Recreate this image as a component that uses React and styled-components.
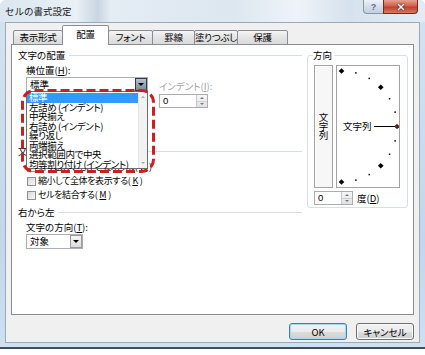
import styled, { createGlobalStyle } from "styled-components"
import { X } from "lucide-react"

const GlobalStyle = createGlobalStyle`
  html, body {
    margin: 0;
    padding: 0;
    background: #ffffff;
  }
  body {
    font-family: "Noto Sans CJK JP", "Noto Sans", sans-serif;
    font-size: 9.5px;
    font-feature-settings: "palt";
    color: #000000;
  }
`

const tabs = [
  { label: "表示形式", w: 50 },
  { label: "配置", w: 47, active: true },
  { label: "フォント", w: 45 },
  { label: "罫線", w: 43 },
  { label: "塗りつぶし", w: 44 },
  { label: "保護", w: 51 },
]

const alignOptions = [
  "標準",
  "左詰め (インデント)",
  "中央揃え",
  "右詰め (インデント)",
  "繰り返し",
  "両端揃え",
  "選択範囲内で中央",
  "均等割り付け (インデント)",
]

// dial: centre on the left edge, marks every 15 degrees
const CX = 4.5
const CY = 60.5
const R = 55.5
const marks = [90, 75, 60, 45, 30, 15, 0, -15, -30, -45, -60, -75, -90].map((a) => {
  const rad = (a * Math.PI) / 180
  return { a, x: CX + R * Math.cos(rad), y: CY - R * Math.sin(rad), big: a % 45 === 0 }
})

export default function App() {
  return (
    <>
      <GlobalStyle />
      <Window>
        <TitleBar>
          <Title>セルの書式設定</Title>
          <Caption>
            <HelpButton>?</HelpButton>
            <CloseButton>
              <X size={10} strokeWidth={3.5} color="#ffffff" />
            </CloseButton>
          </Caption>
        </TitleBar>

        <Body>
          <TabStrip>
            {tabs.map((t) => (
              <Tab key={t.label} $w={t.w} $active={t.active}>
                {t.label}
              </Tab>
            ))}
          </TabStrip>

          <Panel>
            <LeftCol>
              <GroupLabel>文字の配置</GroupLabel>
              <Section>
                <AlignRow>
                  <AlignCol>
                    <Label>横位置(<u>H</u>):</Label>
                    <SelectWrap>
                      <Select $w={122}>
                        <SelectText>標準</SelectText>
                        <ArrowButton $pressed />
                      </Select>
                      <DropList>
                        <ListItems>
                          {alignOptions.map((o, i) => (
                            <ListItem key={o} $selected={i === 0}>
                              {o}
                            </ListItem>
                          ))}
                        </ListItems>
                        <ScrollBar>
                          <ScrollArrow $up />
                          <ScrollArrow />
                        </ScrollBar>
                      </DropList>
                      <Annotation width="134" height="84" viewBox="0 0 134 84">
                        <rect
                          x="1.5"
                          y="1.5"
                          width="131"
                          height="81"
                          rx="12"
                          fill="none"
                          stroke="#cc1f1f"
                          strokeWidth="3"
                          strokeDasharray="9 4"
                        />
                      </Annotation>
                    </SelectWrap>
                    <Label $gap={5}>縦位置(<u>V</u>):</Label>
                    <Select $w={122} $gap={1}>
                      <SelectText>中央揃え</SelectText>
                      <ArrowButton />
                    </Select>
                  </AlignCol>
                  <IndentCol>
                    <Label $disabled>インデント(<u>I</u>):</Label>
                    <Spin $w={49} $gap={2}>
                      <SpinText>0</SpinText>
                      <SpinButtons>
                        <SpinArrow $up />
                        <SpinArrow />
                      </SpinButtons>
                    </Spin>
                  </IndentCol>
                </AlignRow>
              </Section>

              <GroupLabel $gap={20}>文字の制御</GroupLabel>
              <Section>
                <CheckRow $gap={3}>
                  <CheckBox />
                  折り返して全体を表示する(<u>W</u>)
                </CheckRow>
                <CheckRow>
                  <CheckBox />
                  縮小して全体を表示する(<u>K</u>)
                </CheckRow>
                <CheckRow>
                  <CheckBox />
                  セルを結合する(<u>M</u>)
                </CheckRow>
              </Section>

              <GroupLabel $gap={4}>右から左</GroupLabel>
              <Section>
                <Label $gap={3}>文字の方向(<u>T</u>):</Label>
                <Select $w={57} $gap={1}>
                  <SelectText>対象</SelectText>
                  <ArrowButton />
                </Select>
              </Section>
            </LeftCol>

            <RightCol>
              <GroupBox>
                <Legend>方向</Legend>
                <OrientRow>
                  <VerticalButton>文字列</VerticalButton>
                  <Dial>
                    <svg width="62" height="121" viewBox="0 0 62 121">
                      {marks.map((m) =>
                        m.big ? (
                          <rect
                            key={m.a}
                            x={m.x - 2}
                            y={m.y - 2}
                            width="4"
                            height="4"
                            transform={`rotate(45 ${m.x} ${m.y})`}
                            fill={m.a === 0 ? "#6b1a14" : "#000000"}
                          />
                        ) : (
                          <rect key={m.a} x={m.x - 0.75} y={m.y - 0.75} width="1.5" height="1.5" fill="#000000" />
                        )
                      )}
                      <text
                        x="6"
                        y="64"
                        fontSize="9.5"
                        fontFamily='"Noto Sans CJK JP", sans-serif'
                        fill="#000000"
                      >
                        文字列
                      </text>
                      <line x1="37" y1="60.5" x2="58" y2="60.5" stroke="#000000" strokeWidth="1" />
                    </svg>
                  </Dial>
                </OrientRow>
                <DegreeRow>
                  <Spin $w={39}>
                    <SpinText>0</SpinText>
                    <SpinButtons>
                      <SpinArrow $up />
                      <SpinArrow />
                    </SpinButtons>
                  </Spin>
                  <span>
                    度(<u>D</u>)
                  </span>
                </DegreeRow>
              </GroupBox>
            </RightCol>
          </Panel>

          <ButtonRow>
            <Button $default>OK</Button>
            <Button>キャンセル</Button>
          </ButtonRow>
        </Body>
      </Window>
    </>
  )
}

const Window = styled.div`
  width: 425px;
  height: 349px;
  box-sizing: border-box;
  padding: 0 5px 4px;
  display: flex;
  flex-direction: column;
  border-radius: 6px 6px 0 0;
  border-bottom: 2px solid #3d4e5f;
  background: linear-gradient(to bottom, #d5e3ef, #c2d7ea 70%, #cfe0ef);
`

const TitleBar = styled.div`
  height: 22px;
  flex: none;
  margin: 0 -5px;
  padding: 0 7px 0 5px;
  display: flex;
  justify-content: space-between;
  align-items: flex-start;
  border-radius: 6px 6px 0 0;
  background: linear-gradient(
    to right,
    #dbe6f0 0%,
    #e9f0f6 18%,
    #c9d6e2 23%,
    #e4ecf4 26%,
    #dde7f0 55%,
    #eef3f8 70%,
    #d6e2ed 82%,
    #e3ecf4 100%
  );
`

const Title = styled.span`
  line-height: 23px;
  font-size: 9.5px;
  color: #1a1a1a;
  font-feature-settings: normal;
`

const Caption = styled.div`
  display: flex;
`

const HelpButton = styled.span`
  width: 20px;
  height: 14px;
  box-sizing: border-box;
  display: flex;
  align-items: center;
  justify-content: center;
  border: 1px solid #8597a9;
  border-top: none;
  border-right: none;
  border-radius: 0 0 0 4px;
  background: linear-gradient(#eef3f8, #d3dfea 50%, #c0d0df);
  color: #5b6f86;
  font-family: "Liberation Sans", sans-serif;
  font-weight: bold;
  font-size: 9px;
`

const CloseButton = styled.span`
  width: 35px;
  height: 14px;
  box-sizing: border-box;
  display: flex;
  align-items: center;
  justify-content: center;
  border: 1px solid #6d2b22;
  border-top: none;
  border-radius: 0 0 4px 0;
  background: linear-gradient(#e6a08f, #d0634c 45%, #c1402b 55%, #d87c60);
  svg {
    filter: drop-shadow(0 0 1px #4a1a12);
  }
`

const Body = styled.div`
  flex: 1;
  display: flex;
  flex-direction: column;
  padding: 0 5px;
  background: #f0f0f0;
  border: 1px solid #97abbf;
`

const TabStrip = styled.div`
  height: 22px;
  flex: none;
  display: flex;
  align-items: flex-end;
  padding-left: 2px;
  margin-bottom: -1px;
  position: relative;
  z-index: 1;
`

const Tab = styled.div`
  width: ${(p) => p.$w}px;
  height: ${(p) => (p.$active ? 20 : 15)}px;
  box-sizing: border-box;
  margin-left: -1px;
  display: flex;
  align-items: center;
  justify-content: center;
  padding-bottom: ${(p) => (p.$active ? 3 : 0)}px;
  border: 1px solid #898c95;
  border-bottom: ${(p) => (p.$active ? "none" : "1px solid #898c95")};
  border-radius: 2px 2px 0 0;
  background: ${(p) => (p.$active ? "#ffffff" : "linear-gradient(#f4f4f4, #e4e4e4 50%, #dadada)")};
  line-height: 13px;
  letter-spacing: -0.3px;
  white-space: nowrap;
  position: relative;
  z-index: ${(p) => (p.$active ? 2 : 1)};
  &:first-child {
    margin-left: 0;
  }
`

const Panel = styled.div`
  height: 271px;
  box-sizing: border-box;
  flex: none;
  display: flex;
  padding: 4px 4px 0 6px;
  background: #ffffff;
  border: 1px solid #898c95;
`

const LeftCol = styled.div`
  width: 284px;
  display: flex;
  flex-direction: column;
`

const RightCol = styled.div`
  width: 101px;
  margin-left: 5px;
`

const GroupLabel = styled.div`
  height: 12px;
  margin-top: ${(p) => p.$gap || 0}px;
  display: flex;
  align-items: center;
  gap: 4px;
  line-height: 12px;
  white-space: nowrap;
  &::after {
    content: "";
    flex: 1;
    height: 1px;
    background: #d5dfe5;
  }
`

const Section = styled.div`
  padding-left: 8px;
  display: flex;
  flex-direction: column;
`

const Label = styled.div`
  height: 12px;
  line-height: 12px;
  margin-top: ${(p) => p.$gap || 0}px;
  color: ${(p) => (p.$disabled ? "#a2a2a2" : "#000000")};
  white-space: nowrap;
`

const AlignRow = styled.div`
  display: flex;
  margin-top: 3px;
`

const AlignCol = styled.div`
  width: 122px;
  display: flex;
  flex-direction: column;
`

const IndentCol = styled.div`
  margin-left: 11px;
  padding-top: 16px;
  display: flex;
  flex-direction: column;
`

const SelectWrap = styled.div`
  position: relative;
  margin-top: 1px;
`

const Select = styled.div`
  width: ${(p) => p.$w}px;
  height: 15px;
  margin-top: ${(p) => p.$gap || 0}px;
  box-sizing: border-box;
  display: flex;
  align-items: stretch;
  border: 1px solid #abadb3;
  background: #ffffff;
`

const SelectText = styled.span`
  flex: 1;
  padding-left: 3px;
  line-height: 13px;
  white-space: nowrap;
`

const ArrowButton = styled.span`
  width: 10px;
  display: flex;
  align-items: center;
  justify-content: center;
  border: 1px solid ${(p) => (p.$pressed ? "#2c3e50" : "#9a9a9a")};
  background: ${(p) => (p.$pressed ? "linear-gradient(#b9c3ce, #7d8a99)" : "linear-gradient(#f6f6f6, #dcdcdc)")};
  &::after {
    content: "";
    border-left: 3px solid transparent;
    border-right: 3px solid transparent;
    border-top: 3px solid #000000;
  }
`

const DropList = styled.div`
  position: absolute;
  top: 14px;
  left: 0;
  width: 122px;
  height: 78px;
  box-sizing: border-box;
  display: flex;
  border: 1px solid #6e6e6e;
  background: #ffffff;
  z-index: 2;
`

const ListItems = styled.div`
  flex: 1;
  display: flex;
  flex-direction: column;
  padding-top: 1px;
`

const ListItem = styled.div`
  height: 9.5px;
  line-height: 9.5px;
  padding-left: 2px;
  white-space: nowrap;
  letter-spacing: -0.4px;
  background: ${(p) => (p.$selected ? "#3399ff" : "transparent")};
  color: ${(p) => (p.$selected ? "#ffffff" : "#000000")};
`

const ScrollBar = styled.div`
  width: 8px;
  display: flex;
  flex-direction: column;
  justify-content: space-between;
  align-items: center;
  padding: 4px 0;
  background: #f2f2f2;
  border-left: 1px solid #e6e6e6;
`

const ScrollArrow = styled.span`
  border-left: 2px solid transparent;
  border-right: 2px solid transparent;
  border-bottom: ${(p) => (p.$up ? "2px solid #a8a8a8" : "none")};
  border-top: ${(p) => (p.$up ? "none" : "2px solid #a8a8a8")};
`

const Annotation = styled.svg`
  position: absolute;
  left: -5px;
  top: 12px;
  z-index: 3;
`

const Spin = styled.div`
  width: ${(p) => p.$w}px;
  height: 14px;
  margin-top: ${(p) => p.$gap || 0}px;
  box-sizing: border-box;
  display: flex;
  border: 1px solid #abadb3;
  background: #ffffff;
`

const SpinText = styled.span`
  flex: 1;
  padding-left: 3px;
  line-height: 12px;
  font-family: "Liberation Sans", sans-serif;
  font-size: 9.5px;
`

const SpinButtons = styled.span`
  width: 10px;
  display: flex;
  flex-direction: column;
  border-left: 1px solid #c8c8c8;
  background: linear-gradient(#f7f7f7, #e2e2e2);
`

const SpinArrow = styled.span`
  flex: 1;
  display: flex;
  align-items: center;
  justify-content: center;
  border-bottom: ${(p) => (p.$up ? "1px solid #d0d0d0" : "none")};
  &::after {
    content: "";
    border-left: 2px solid transparent;
    border-right: 2px solid transparent;
    border-bottom: ${(p) => (p.$up ? "2px solid #6a7a8a" : "none")};
    border-top: ${(p) => (p.$up ? "none" : "2px solid #6a7a8a")};
  }
`

const CheckRow = styled.div`
  height: 14px;
  margin-top: ${(p) => p.$gap || 0}px;
  display: flex;
  align-items: center;
  gap: 2px;
  line-height: 12px;
  font-size: 9px;
  letter-spacing: -0.4px;
  white-space: nowrap;
`

const CheckBox = styled.span`
  width: 9px;
  height: 9px;
  margin-left: 1px;
  box-sizing: border-box;
  border: 1px solid #8f8f8f;
  background: linear-gradient(135deg, #d8d8d8, #f8f8f8);
`

const GroupBox = styled.fieldset`
  width: 101px;
  box-sizing: border-box;
  margin: 0;
  padding: 0 0 2px 6px;
  border: 1px solid #d5dfe5;
  border-radius: 3px;
`

const Legend = styled.legend`
  padding: 0 2px 0 0;
  margin-left: -1px;
  line-height: 12px;
  height: 12px;
`

const OrientRow = styled.div`
  display: flex;
  gap: 3px;
  margin-top: 4px;
`

const VerticalButton = styled.div`
  width: 19px;
  height: 123px;
  box-sizing: border-box;
  display: flex;
  align-items: center;
  justify-content: center;
  border: 1px solid #a3a3a3;
  box-shadow: inset 1px 1px 0 #ffffff;
  background: #f7f7f7;
  writing-mode: vertical-rl;
  text-orientation: upright;
  line-height: 12px;
  letter-spacing: -0.5px;
`

const Dial = styled.div`
  width: 64px;
  height: 123px;
  box-sizing: border-box;
  border: 1px solid #a3a3a3;
  background: #ffffff;
  svg {
    display: block;
  }
`

const DegreeRow = styled.div`
  display: flex;
  align-items: center;
  gap: 4px;
  margin-top: 3px;
  line-height: 12px;
`

const ButtonRow = styled.div`
  display: flex;
  justify-content: flex-end;
  gap: 9px;
  padding-top: 8px;
`

const Button = styled.div`
  width: 58px;
  height: 17px;
  box-sizing: border-box;
  display: flex;
  align-items: center;
  justify-content: center;
  border: 1px solid ${(p) => (p.$default ? "#3c7fb1" : "#707070")};
  border-radius: 3px;
  box-shadow: inset 0 0 0 1px ${(p) => (p.$default ? "#a6d8f0" : "#fbfbfb")};
  background: linear-gradient(#f2f2f2, #ebebeb 50%, #dddddd 51%, #cfcfcf);
  line-height: 12px;
`
